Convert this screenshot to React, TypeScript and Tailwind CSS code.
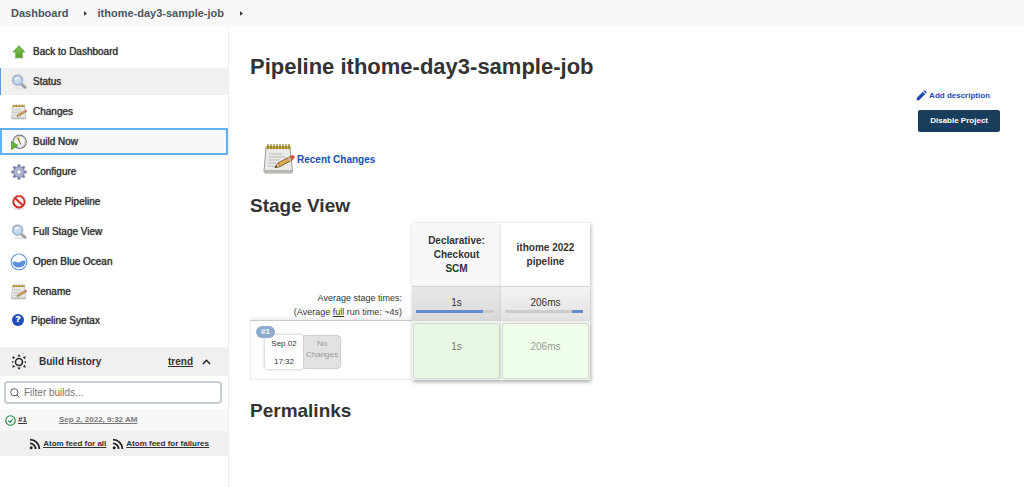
import { ReactNode } from "react";
import clsx from "clsx";

// slightly heavier than regular, lighter than bold
const medium = "[text-shadow:0_0_1px_currentColor]";

const ArrowUpIcon = () => (
  <svg viewBox="0 0 16 16" className="size-4">
    <defs>
      <linearGradient id="up" x1="0" y1="0" x2="0" y2="1">
        <stop offset="0" stopColor="#7fc35a" />
        <stop offset="1" stopColor="#5aa02c" />
      </linearGradient>
    </defs>
    <ellipse cx="8" cy="14" rx="6" ry="1.2" fill="#ddd" />
    <path
      d="M8 1.6 L13.8 8 H11.3 V13.4 H4.7 V8 H2.2 Z"
      fill="url(#up)"
      stroke="#5a9e34"
      strokeWidth="0.7"
      strokeLinejoin="round"
    />
  </svg>
);

const SearchIcon = () => (
  <svg viewBox="0 0 16 16" className="size-4">
    <ellipse cx="8.5" cy="14.2" rx="6" ry="1.2" fill="#e6e6e6" />
    <path d="M10.4 10 L14 13.2" stroke="#8b8e8b" strokeWidth="2.8" strokeLinecap="round" />
    <path d="M10.8 10 L13.8 12.8" stroke="#c9cac7" strokeWidth="1" strokeLinecap="round" />
    <circle cx="6.6" cy="6.2" r="5.2" fill="#c5dcf6" stroke="#b3b8c0" strokeWidth="1.3" />
    <circle cx="6.6" cy="6.2" r="4.2" fill="none" stroke="#8fb0dc" strokeWidth="0.8" />
    <path d="M3.4 6 A3.3 3.3 0 0 1 9 3.8 C7.4 4.8 5.2 5.2 3.4 6Z" fill="#eef5fd" />
  </svg>
);

const NotepadIcon = ({ className = "size-4" }: { className?: string }) => (
  <svg viewBox="0 0 32 32" className={className}>
    <path d="M3 4 H27 L29.5 28.5 Q29.5 30 28 30 H2.5 Q1 30 1 28.5 Z" fill="#e9e9e7" stroke="#9c9c98" />
    <path d="M1.5 27 H29 V29.3 H1.5Z" fill="#b4b4b0" />
    <path d="M3 3 H27.5 V6 H3Z" fill="#c5ae45" />
    <path
      d="M5 1 V6 M8 1 V6 M11 1 V6 M14 1 V6 M17 1 V6 M20 1 V6 M23 1 V6 M26 1 V6"
      stroke="#8e7b27"
      strokeWidth="1.3"
    />
    <path d="M6 11 H19 M6 14 H22 M5 17 H16 M5 20 H13 M5 23 H12" stroke="#b9b9b5" strokeWidth="1" />
    <path d="M12 24.5 L15 20 L28 13 L30 16.5 L17 23.5 Z" fill="#dca855" stroke="#7c5420" strokeWidth="0.9" />
    <path d="M12 24.5 L15 20 L17 23.5Z" fill="#f0dcb4" stroke="#7c5420" strokeWidth="0.6" />
    <path d="M12 24.5 L13.5 22.3 L14.4 23.9Z" fill="#333" />
    <path d="M26.5 13.8 L29 12.3 Q31.5 11.8 31.8 14.5 L28.5 17.3Z" fill="#d5503c" />
    <path d="M25 14.6 L26.7 13.7 L28.7 17.2 L27 18.1Z" fill="#b9bcb6" />
  </svg>
);

const ClockIcon = () => (
  <svg viewBox="0 0 16 16" className="size-4">
    <circle cx="8.6" cy="7.8" r="6.7" fill="#f4f3ec" stroke="#7d7f88" strokeWidth="1.2" />
    <circle cx="8.6" cy="7.8" r="5.5" fill="none" stroke="#c8c9d2" strokeWidth="0.9" />
    <path d="M8.6 7.8 L8.6 2.4 A5.4 5.4 0 0 0 4.8 4Z" fill="#efd67a" />
    <path d="M6.8 4 L8.8 7.8 M8.8 7.8 L9.5 10.6" fill="none" stroke="#4b4b4b" strokeWidth="0.9" />
    <path d="M0.5 7.4 L7 11.4 L0.5 15.6Z" fill="#63b83b" stroke="#438b23" strokeWidth="0.7" />
  </svg>
);

const GearIcon = () => (
  <svg viewBox="0 0 16 16" className="size-4">
    <g fill="#8489ae">
      {[0, 45, 90, 135, 180, 225, 270, 315].map((angle) => (
        <path key={angle} d="M6.8 0.2 H9.2 L10.1 4 H5.9Z" transform={`rotate(${angle} 8 8)`} />
      ))}
    </g>
    <circle cx="8" cy="8" r="5.3" fill="#a3a9cc" stroke="#777ca3" strokeWidth="0.5" />
    <circle cx="8" cy="8" r="3.9" fill="none" stroke="#b7bcd8" strokeWidth="0.8" />
    <circle cx="8" cy="8" r="2.2" fill="#fff" stroke="#8a8fb4" strokeWidth="0.6" />
  </svg>
);

const ForbiddenIcon = () => (
  <svg viewBox="0 0 16 16" className="size-4">
    <ellipse cx="8" cy="14.8" rx="5.5" ry="0.9" fill="#ddd" />
    <circle cx="8" cy="7.7" r="5.7" fill="#fbeeee" stroke="#c8342b" strokeWidth="2" />
    <path d="M4 3.9 L12 11.5" stroke="#c8342b" strokeWidth="2" />
    <path d="M2.1 6.4 A6 6 0 0 1 13.9 6.4" fill="none" stroke="#e27b73" strokeWidth="0.7" />
  </svg>
);

const OceanIcon = () => (
  <svg viewBox="0 0 18 18" className="size-4 scale-110">
    <circle cx="9" cy="9" r="8.1" fill="#fff" stroke="#5b90dd" strokeWidth="1.1" />
    <path
      d="M2.2 9.4 C4 8 5.500 8.100 7.200 9.200 C9.500 10.700 10.500 7.600 13.500 7.400 C14.800 7.300 15.500 7.900 15.900 8.300 A7 7 0 0 1 2.200 9.400Z"
      fill="#5b90dd"
    />
  </svg>
);

const HelpIcon = () => (
  <span className="flex size-3 items-center justify-center rounded-full bg-[#1d4cb3] text-[9px] font-bold text-white">
    ?
  </span>
);

const BuildHistoryIcon = () => (
  <svg viewBox="0 0 16 16" className="size-4" fill="#222">
    <circle cx="8" cy="8" r="3.500" fill="none" stroke="#222" strokeWidth="1.500" />
    <path d="M8 0.200 L9.700 2.500 H6.300Z M8 15.800 L6.300 13.500 H9.700Z" />
    <path d="M1.300 2.300 L4.200 3.200 L2 5.200Z M14.700 2.300 L14 5.200 L11.800 3.200Z" />
    <path d="M1.300 13.700 L2 10.800 L4.200 12.800Z M14.700 13.700 L11.800 12.800 L14 10.800Z" />
    <path d="M1 7.200 H2.400 V8.800 H1Z M13.600 7.200 H15 V8.800 H13.600Z" />
  </svg>
);

const FeedIcon = () => (
  <svg viewBox="0 0 12 12" className="size-3 shrink-0" fill="none" stroke="#222" strokeWidth="1.800">
    <circle cx="2.200" cy="9.800" r="1.500" fill="#222" stroke="none" />
    <path d="M1 5.400 A5.600 5.600 0 0 1 6.600 11 M1 1.600 A9.400 9.400 0 0 1 10.400 11" />
  </svg>
);

type Task = {
  label: string;
  icon: ReactNode;
  state?: "active" | "focused";
};

const tasks: Task[] = [
  { label: "Back to Dashboard", icon: <ArrowUpIcon /> },
  { label: "Status", icon: <SearchIcon />, state: "active" },
  { label: "Changes", icon: <NotepadIcon /> },
  { label: "Build Now", icon: <ClockIcon />, state: "focused" },
  { label: "Configure", icon: <GearIcon /> },
  { label: "Delete Pipeline", icon: <ForbiddenIcon /> },
  { label: "Full Stage View", icon: <SearchIcon /> },
  { label: "Open Blue Ocean", icon: <OceanIcon /> },
  { label: "Rename", icon: <NotepadIcon /> },
];

const Breadcrumbs = () => (
  <nav className="flex h-[26px] items-center bg-[#f8f8f8] pl-[11px] text-[11px] font-bold text-[#4d545d]">
    <a href="#dashboard">Dashboard</a>
    <Caret />
    <a href="#job">ithome-day3-sample-job</a>
    <Caret />
  </nav>
);

const Caret = () => (
  <svg viewBox="0 0 4 6" className="mr-[10px] ml-4 h-[5px] w-[3px]">
    <path d="M0 0 L4 3 L0 6Z" fill="#333" />
  </svg>
);

const TaskList = () => (
  <ul className={clsx("flex flex-col gap-[3px] pt-3 text-[10px]", medium)}>
    {tasks.map(({ label, icon, state }) => (
      <li key={label}>
        <a
          href="#task"
          className={clsx(
            "flex h-[27px] items-center gap-[6px] pl-[11px]",
            state === "active" && "bg-[#f0f0f0] shadow-[inset_1px_0_0_#5d9be0]",
            state === "focused" && "bg-[#f8f8f8] shadow-[inset_0_0_0_2px_#62b0ee]"
          )}
        >
          {icon}
          {label}
        </a>
      </li>
    ))}
    <li>
      <a href="#syntax" className="flex h-6 items-center gap-[7px] pl-3">
        <HelpIcon />
        Pipeline Syntax
      </a>
    </li>
  </ul>
);

const BuildHistory = () => (
  <section className="mt-[15px]">
    <div className="flex h-[29px] items-center bg-[#f0f0f0] pr-[17px] pl-[11px] text-[10px] font-bold">
      <BuildHistoryIcon />
      <h2 className="ml-3">Build History</h2>
      <a href="#trend" className="ml-auto underline">
        trend
      </a>
      <button type="button" aria-label="Collapse" className="ml-[9px]">
        <svg viewBox="0 0 9 6" className="h-[6px] w-[9px]" fill="none" stroke="#222" strokeWidth="1.500">
          <path d="M1 5 L4.500 1.300 L8 5" />
        </svg>
      </button>
    </div>
    <div className="px-1 py-[5px]">
      <label className="flex h-[23px] w-[218px] items-center gap-1 rounded border-2 border-[#c6cdd4] bg-white pl-1">
        <svg viewBox="0 0 10 10" className="size-[10px]" fill="none" stroke="#444" strokeWidth="0.900">
          <circle cx="4.300" cy="4.300" r="3.600" />
          <path d="M7 7 L9.500 9.500" />
        </svg>
        <input
          type="text"
          aria-label="Filter builds"
          placeholder="Filter builds..."
          className="min-w-0 flex-1 text-[10px] outline-none placeholder:text-[#757575]"
        />
      </label>
    </div>
    <div className="flex h-[22px] items-center bg-[#f8f8f8] pl-[5px] text-[8px] font-bold">
      <svg viewBox="0 0 11 11" className="size-[11px]" fill="none" stroke="#1f8a3f" strokeWidth="1.100">
        <circle cx="5.500" cy="5.500" r="4.700" />
        <path d="M3.200 5.600 L4.900 7.200 L7.800 4" />
      </svg>
      <a href="#1" className="ml-[2px] w-[41px] underline">
        #1
      </a>
      <a href="#1" className="text-[#777] underline">
        Sep 2, 2022, 9:32 AM
      </a>
    </div>
    <div className="flex h-[25px] items-center justify-end gap-[6px] bg-[#f0f0f0] pr-[19px] text-[8px] font-bold">
      <a href="#all" className="flex items-center gap-[2px] underline">
        <FeedIcon />
        Atom feed for all
      </a>
      <a href="#failures" className="flex items-center gap-[2px] underline">
        <FeedIcon />
        Atom feed for failures
      </a>
    </div>
  </section>
);

const stages = [
  { name: "Declarative: Checkout SCM", time: "1s", offset: 0, share: 86 },
  { name: "ithome 2022 pipeline", time: "206ms", offset: 86, share: 14 },
];

const StageTable = () => (
  <table className="mt-[6px] border-separate border-spacing-0 text-[10px] leading-[14px] text-[#333]">
    <thead>
      <tr className="h-[63px]">
        <td className="w-[162px]" />
        {stages.map(({ name }, i) => (
          <th
            key={name}
            className={clsx(
              "w-[89px] px-3 font-bold shadow-[1px_1px_4px_#bbb]",
              i === 0 ? "bg-[#f8f8f8]" : "bg-white"
            )}
          >
            {name}
          </th>
        ))}
      </tr>
    </thead>
    <tbody>
      <tr className="h-[35px]">
        <td className="border-b border-[#c8c8c8] bg-linear-to-b from-white from-85% to-[#eee] pt-1 pr-[10px] text-right text-[9px] whitespace-nowrap">
          Average stage times:
          <br />
          (Average <u>full</u> run time: ~4s)
        </td>
        {stages.map(({ name, time, offset, share }, i) => (
          <td
            key={name}
            className={clsx(
              "border-t border-[#d4d4d4] bg-linear-to-b px-1 text-center shadow-[1px_2px_4px_#bbb]",
              i === 0 ? "from-[#e8e8e8] to-[#dadada]" : "from-[#f2f2f2] to-[#e2e2e2]"
            )}
          >
            {time}
            <div className="mr-[3px] h-[3px] bg-[#ccc]">
              <div
                className="h-full bg-[#648bcb]"
                style={{ marginLeft: `${offset}%`, width: `${share}%` }}
              />
            </div>
          </td>
        ))}
      </tr>
      <tr className="h-[59px]">
        <td className="border-b border-l border-[#ededed] p-0 align-top">
          <div className="relative ml-[14px] flex w-[76px] pt-[14px] text-center text-[8px]">
            <a
              href="#1"
              className="absolute top-[5px] -left-[9px] rounded-full bg-[#8cabce] px-[5px] text-[8px] leading-[12px] font-bold text-white"
            >
              #1
            </a>
            <div className="flex h-[34px] w-[38px] flex-col justify-between bg-white pt-[2px] shadow-[0_0_3px_#aaa]">
              <span>Sep 02</span>
              <span>17:32</span>
            </div>
            <div className="h-[34px] w-[38px] rounded-r border border-[#cfcfcf] bg-[#e2e2e2] pt-[2px] leading-[11px] text-[#999]">
              No Changes
            </div>
          </div>
        </td>
        {stages.map(({ name, time }, i) => (
          <td
            key={name}
            className="bg-[#eef1ee] p-0 pt-[1px] text-center shadow-[1px_2px_4px_#aaa]"
          >
            <div
              className={clsx(
                "mx-[1px] flex h-[56px] items-center justify-center rounded-[3px] border border-[#cddccc] pb-2",
                i === 0 ? "bg-[#e8f8e3] text-[#777]" : "bg-[#efffe9] text-[#999]"
              )}
            >
              {time}
            </div>
          </td>
        ))}
      </tr>
    </tbody>
  </table>
);

const App = () => (
  <div className="min-h-screen bg-white font-['Liberation_Sans',Arial,sans-serif] text-[#333]">
    <Breadcrumbs />
    <div className="flex min-h-[calc(100vh-26px)]">
      <aside className="w-[229px] shrink-0 border-r border-[#eee]">
        <TaskList />
        <BuildHistory />
      </aside>
      <main className="flex-1 pt-7 pr-6 pl-[21px]">
        <h1 className="text-[22px] leading-[26px] font-bold">Pipeline ithome-day3-sample-job</h1>
        <div className="mt-[9px] flex flex-col items-end gap-2 text-[8px] font-bold">
          <a href="#description" className="mr-[10px] flex h-[13px] items-center gap-[2px] text-[#1d4cb3]">
            <svg viewBox="0 0 12 12" className="size-[11px]" fill="#1d4cb3">
              <path d="M0.500 11.500 L1.200 8.300 L7.600 1.900 L10.100 4.400 L3.700 10.800Z M8.300 1.200 L9 0.500 Q9.500 0.200 10 0.600 L11.400 2 Q11.800 2.500 11.500 3 L10.800 3.700Z" />
            </svg>
            Add description
          </a>
          <button type="button" className="h-[22px] rounded-[2px] bg-[#193d5c] px-3 text-white">
            Disable Project
          </button>
        </div>
        <a
          href="#changes"
          className="mt-[11px] ml-[13px] flex h-8 w-fit items-center gap-[2px] text-[10px] font-bold text-[#1d4cb3]"
        >
          <NotepadIcon className="size-8" />
          Recent Changes
        </a>
        <h2 className="mt-5 text-[19px] leading-[22px] font-bold">Stage View</h2>
        <StageTable />
        <h2 className="mt-5 text-[19px] leading-[22px] font-bold">Permalinks</h2>
      </main>
    </div>
  </div>
);

export default App;
